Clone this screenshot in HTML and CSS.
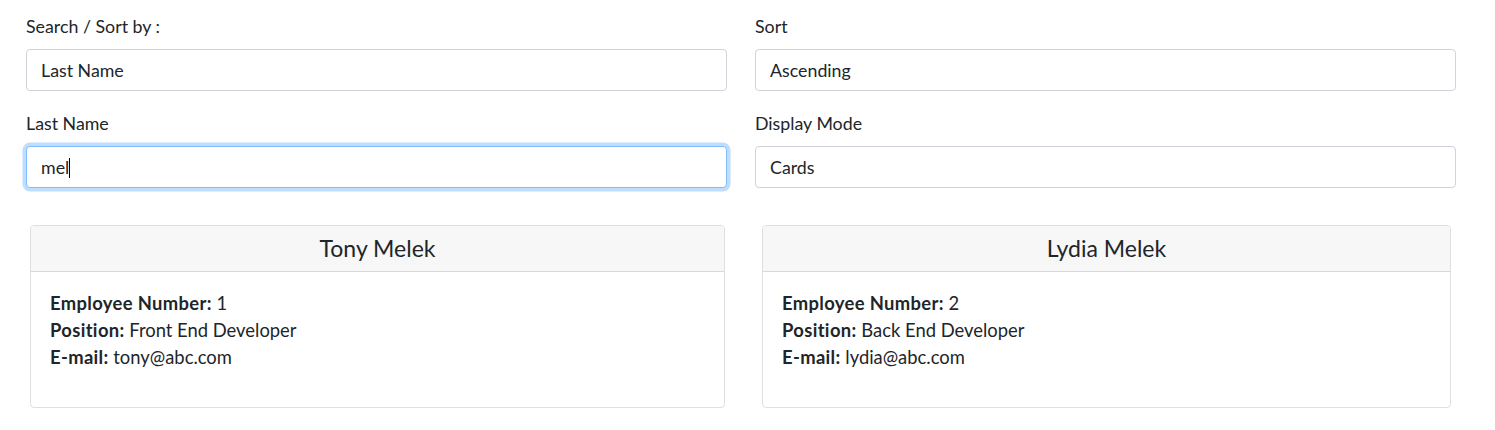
FILE: index.html
```html
<!DOCTYPE html>
<html lang="en">
<head>
<meta charset="utf-8">
<title>Employees</title>
<link rel="stylesheet" href="styles.css">
</head>
<body>
<div class="page">
  <div class="form-grid">
    <div class="field">
      <label class="label">Search / Sort by :</label>
      <div class="input">Last Name</div>
    </div>
    <div class="field">
      <label class="label">Sort</label>
      <div class="input">Ascending</div>
    </div>
    <div class="field">
      <label class="label">Last Name</label>
      <div class="input focused">mel<span class="caret"></span></div>
    </div>
    <div class="field">
      <label class="label">Display Mode</label>
      <div class="input">Cards</div>
    </div>
  </div>
  <div class="cards">
    <div class="card">
      <div class="card-header">Tony Melek</div>
      <div class="card-body">
        <div><b>Employee Number:</b> 1</div>
        <div><b>Position:</b> Front End Developer</div>
        <div><b>E-mail:</b> tony@abc.com</div>
      </div>
    </div>
    <div class="card">
      <div class="card-header">Lydia Melek</div>
      <div class="card-body">
        <div><b>Employee Number:</b> 2</div>
        <div><b>Position:</b> Back End Developer</div>
        <div><b>E-mail:</b> lydia@abc.com</div>
      </div>
    </div>
  </div>
</div>
</body>
</html>
```

FILE: styles.css
```css
html, body {
  margin: 0;
  padding: 0;
  background: #fff;
}
body {
  font-family: "Lato", "Noto Sans", sans-serif;
  font-size: 17.8px;
  line-height: 1.5;
  color: #212529;
}
.page {
  padding: 14px 39px 0 26px;
}
.form-grid {
  display: grid;
  grid-template-columns: 1fr 1fr;
  column-gap: 28px;
  row-gap: 20px;
}
.field {
  display: flex;
  flex-direction: column;
}
.label {
  display: block;
  height: 26px;
  line-height: 25px;
  margin-bottom: 9px;
}
.input {
  box-sizing: border-box;
  height: 42px;
  border: 1px solid #ced4da;
  border-radius: 4px;
  padding: 7px 14px;
  line-height: 26px;
  color: #212529;
  background: #fff;
}
.input.focused {
  border-color: #80bdff;
  box-shadow: 0 0 0 3.5px rgba(0, 123, 255, 0.25);
}
.caret {
  display: inline-block;
  width: 1px;
  height: 20px;
  background: #000;
  vertical-align: -4px;
}
.cards {
  display: grid;
  grid-template-columns: 695px 689px;
  column-gap: 37px;
  padding-left: 4px;
  margin-top: 37px;
}
.card {
  border: 1px solid rgba(0, 0, 0, 0.125);
  border-radius: 4px;
  height: 183px;
  box-sizing: border-box;
  overflow: hidden;
}
.card-header {
  height: 46px;
  box-sizing: border-box;
  background: #f7f7f7;
  border-bottom: 1px solid rgba(0, 0, 0, 0.125);
  text-align: center;
  font-size: 23px;
  line-height: 45px;
}
.card-body {
  padding: 18px 19px 17px;
  font-size: 18.4px;
  line-height: 27px;
}
.card-body b {
  font-weight: 700;
  letter-spacing: 0.35px;
}
```
